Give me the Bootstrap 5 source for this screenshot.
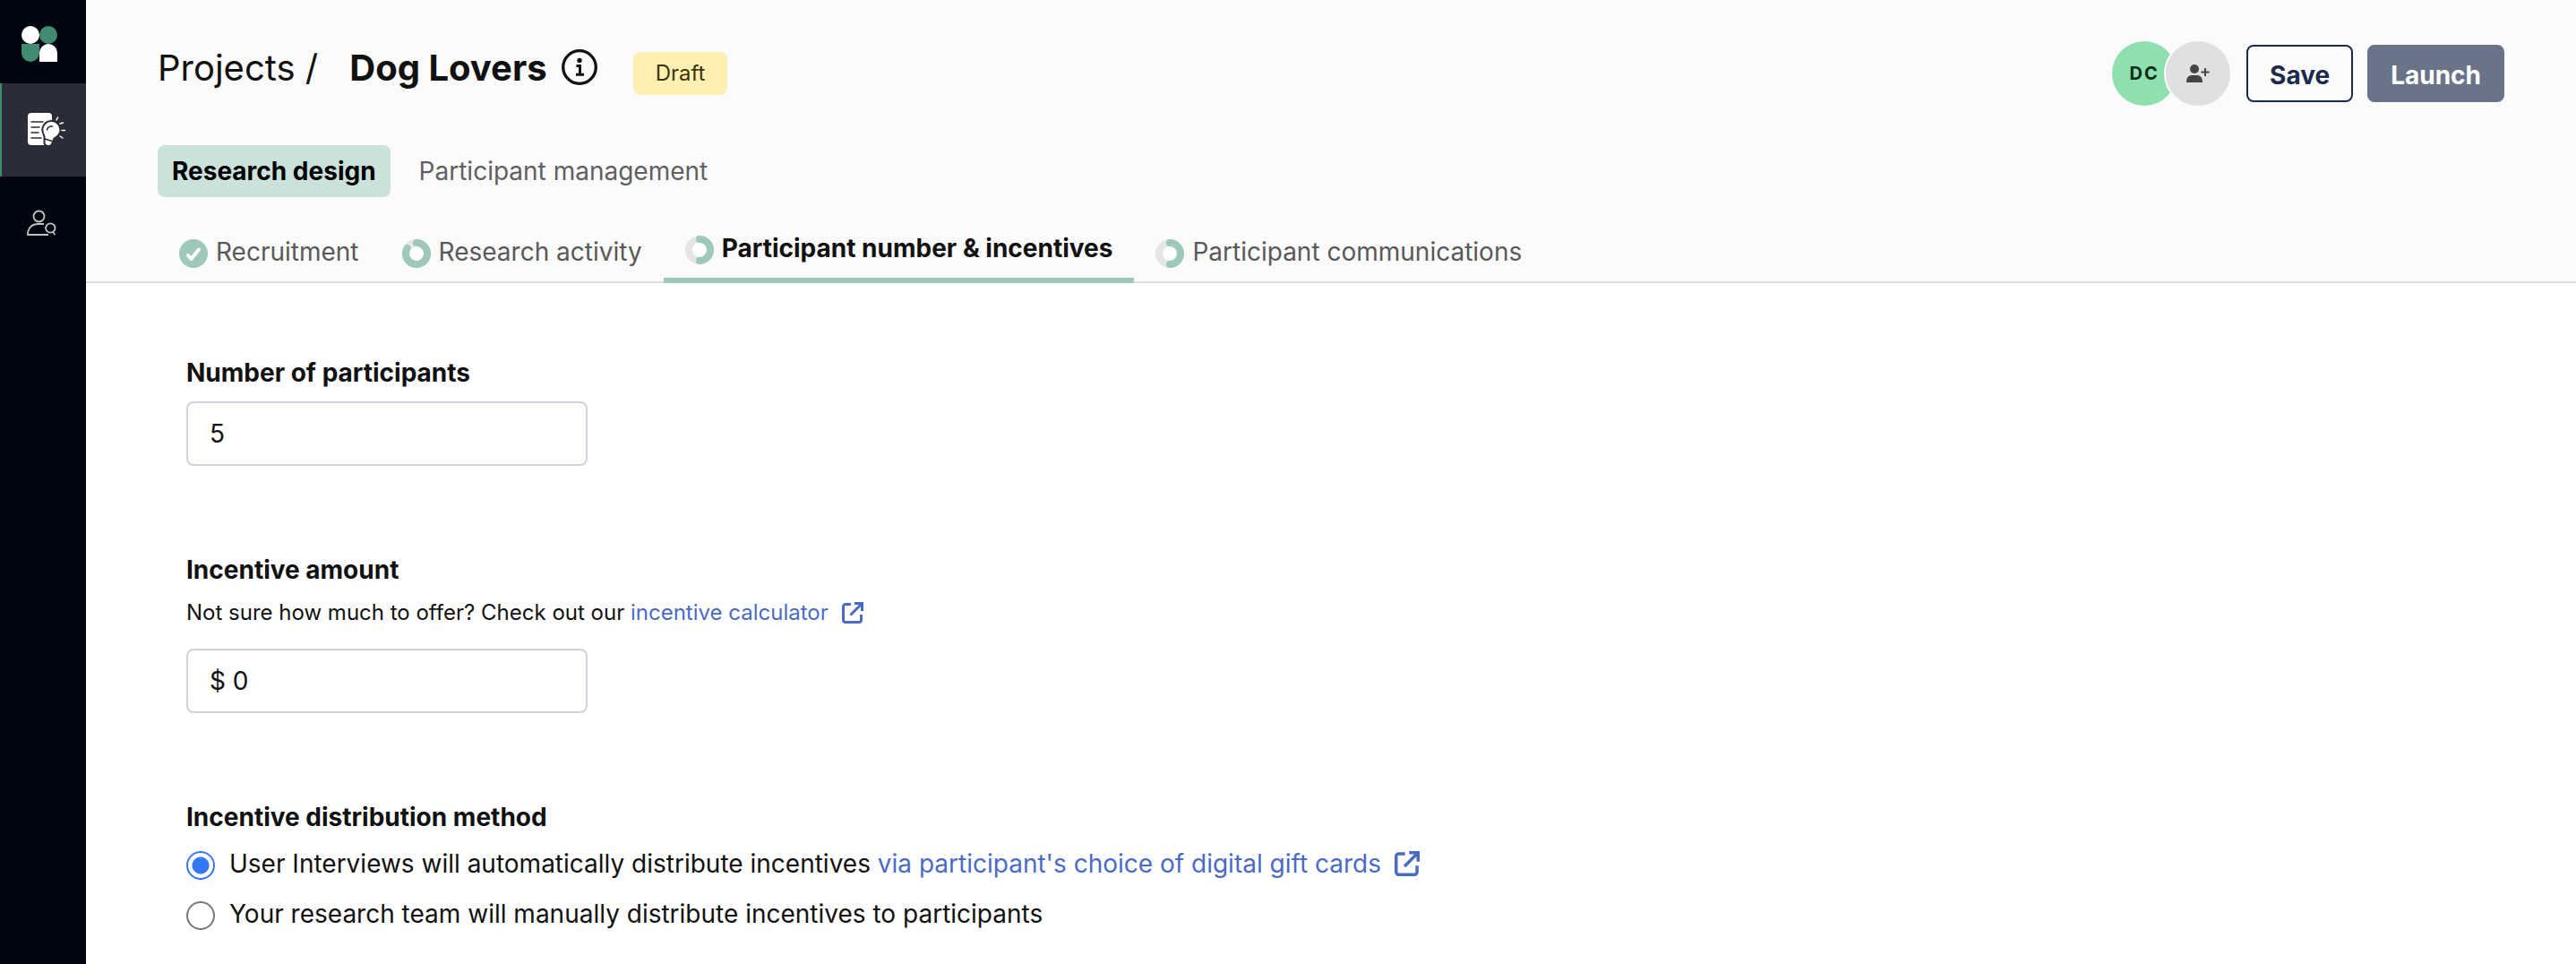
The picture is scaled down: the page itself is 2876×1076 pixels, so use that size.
<!DOCTYPE html>
<html lang="en">
<head>
<meta charset="utf-8">
<meta name="viewport" content="width=device-width, initial-scale=1">
<title>Dog Lovers</title>
<link href="https://cdn.jsdelivr.net/npm/bootstrap@5.3.0/dist/css/bootstrap.min.css" rel="stylesheet">
<style>
body{font-family:Inter,"Liberation Sans",sans-serif;font-size:28px;line-height:42px;color:#111;background:#fff}
a{text-decoration:none}
svg{display:block;flex:none}
.side-rail{width:96px;background:#00060f}
.rail-brand{height:93px;padding:29px 0 0 24px}
.rail-link{height:104px;padding-left:30px;display:flex;align-items:center}
.rail-link.active{background:#2a2d38;border-left:2px solid #418b70;padding-left:28px}
.page-head{background:#fbfbfb;border-bottom:2px solid #dcdcdc;padding:46px 80px 0}
.crumbs{font-size:40px;line-height:60px}
.crumbs h1{font-size:40px;line-height:60px;font-weight:700;margin:0 16px 0 35px}
.crumbs a{color:#111}
.info-btn{border:0;background:none;padding:0;margin-top:9px;color:#111}
.draft-tag{font-size:24px;line-height:48px;padding:0 25px;border-radius:8px;background:#fdf0b2;color:#3d3408;margin:12px 0 0 40px}
.avatar{width:72px;height:72px;border-radius:50%;border:0;padding:0;font-size:20px;font-weight:700;letter-spacing:2px}
.avatar-dc{background:#8ee0b0;color:#0c2c1a}
.avatar-add{width:76px;height:76px;background:#e0e0e0;border:2px solid #fbfbfb;margin:-2px 16px -2px -14px;color:#444}
.act{height:64px;font-size:28px;font-weight:700;line-height:42px;border-radius:8px;padding:11px 24px 7px;border:2px solid #1a2b4c;color:#1a2b4c;background:#fbfbfb}
.act-launch{background:#6a7488;border-color:#6a7488;color:#fff}
.main-tabs{margin-top:44px;gap:16px}
.main-tabs a{padding:8px 16px;border-radius:8px;color:#606060}
.main-tabs a.active{background:#cbe2db;color:#000;font-weight:700}
.steps{margin:36px 0 -2px}
.steps a{display:flex;align-items:center;gap:9px;padding:0 24px 14px;color:#595959}
.steps a.active{padding-bottom:12px;border-bottom:6px solid #9dc8bb;color:#111;font-weight:700}
.steps svg{margin-top:4px}
.form-body{padding:79px 112px 24px}
.field{margin-bottom:95px}
.field-title{display:block;font-size:28px;line-height:42px;font-weight:700;margin:0}
.field .form-control{width:448px;height:72px;border:2px solid #ced4da;border-radius:8px;padding:0 24px;font-size:28px;line-height:42px;color:#111;background:#fff;margin-top:11px}
.hint{font-size:24px;line-height:36px;margin:9px 0 0}
.field .hint + .form-control{margin-top:22px}
legend.field-title{float:none;margin-bottom:10px}
.ext{color:#4a6bc4;display:inline-flex;align-items:center;gap:15px}
.option{display:flex;gap:16px}
.option + .option{margin-top:14px}
.option .form-check-input{width:32px;height:32px;margin:7px 0 0;border:2px solid #767676;background-color:#fff;flex:none}
.option .form-check-input:checked{border-color:#3478f6;background-image:radial-gradient(circle,#3478f6 9px,#fff 10px)}
</style>
</head>
<body>
<div class="d-flex min-vh-100">
  <nav class="side-rail flex-shrink-0" aria-label="Main">
    <a class="rail-brand d-block" href="#" aria-label="Home">
      <svg width="40" height="40" viewBox="0 0 40 40"><circle cx="10" cy="10" r="10" fill="#fff"/><circle cx="30" cy="10" r="10" fill="#418b70"/><path d="M0 20h20v10a10 10 0 0 1-20 0z" fill="#418b70"/><path d="M20 40V30a10 10 0 0 1 20 0v10z" fill="#fff"/></svg>
    </a>
    <a class="rail-link active" href="#" aria-label="Projects">
      <svg width="44" height="40" viewBox="0 0 44 40" fill="none" stroke-linecap="round">
        <rect x="1" y="1" width="27" height="36" rx="4" fill="#fff"/>
        <path d="M5 11h13M5 17h9M5 23h8M5 29h11" stroke="#2a2d38" stroke-width="1.6"/>
        <path d="M19.500 31.500c1-3.500-.5-5.500-1.500-8a10 10 0 0 1 9-13.500 10 10 0 0 1 10.500 10c0 5-3.500 7.500-7 9.500l-2.500 6c-1.500 4-8.500 3-8.500-1.500z" fill="#fff" stroke="#2a2d38" stroke-width="2"/>
        <path d="M20 30l8 2.500" stroke="#2a2d38" stroke-width="1.500"/>
        <path d="M22.500 20c.5-3 3-4 6-4" stroke="#2a2d38" stroke-width="1.500"/>
        <path d="M33 9l1.500-3M37 13l3.500-1M39 20.500h3.500M37 27l3 2" stroke="#fff" stroke-width="1.500"/>
      </svg>
    </a>
    <a class="rail-link" href="#" aria-label="Participants">
      <svg width="34" height="30" viewBox="0 0 34 30" fill="none" stroke="#c0c2c5" stroke-width="1.800"><circle cx="13.500" cy="7.500" r="6"/><path d="M19 16h-6C6 16 1 20 1 28h23"/><circle cx="26.300" cy="20.500" r="5.200"/><path d="M29 25l2.500 3"/></svg>
    </a>
  </nav>
  <div class="flex-grow-1">
    <header class="page-head">
      <div class="d-flex justify-content-between align-items-start">
        <div class="crumbs d-flex align-items-start">
          <span><a href="#">Projects</a> /</span>
          <h1>Dog Lovers</h1>
          <button type="button" class="info-btn" aria-label="Project information">
            <svg width="40" height="40" viewBox="0 0 40 40" fill="none" stroke="currentColor"><circle cx="20" cy="20" r="18.300" stroke-width="3.300"/><circle cx="20" cy="12.500" r="2.700" fill="currentColor" stroke="none"/><path d="M16.500 18.500H20.500V28M16 28.200h9" stroke-width="3"/></svg>
          </button>
          <span class="draft-tag">Draft</span>
        </div>
        <div class="d-flex align-items-center">
          <span class="avatar avatar-dc d-flex align-items-center justify-content-center">DC</span>
          <button type="button" class="avatar avatar-add d-flex align-items-center justify-content-center" aria-label="Add collaborator">
            <svg width="26" height="22" viewBox="0 0 26 22" fill="currentColor"><circle cx="9" cy="6" r="5"/><path d="M0 21c0-6 3-8 6-8h6c3 0 6 2 6 8z"/><path d="M21 5v9M16.500 9.500h9" stroke="currentColor" stroke-width="2"/></svg>
          </button>
          <div class="d-flex gap-3">
            <button type="button" class="btn act">Save</button>
            <button type="button" class="btn act act-launch">Launch</button>
          </div>
        </div>
      </div>
      <nav class="main-tabs d-flex" aria-label="Project sections">
        <a class="active" href="#">Research design</a>
        <a href="#">Participant management</a>
      </nav>
      <nav class="steps d-flex align-items-end" aria-label="Steps">
        <a href="#"><svg width="32" height="32" viewBox="0 0 32 32"><circle cx="16" cy="16" r="16" fill="#9dc8bb"/><path d="M10 18l3.500 4 8.500-10.500" fill="none" stroke="#fff" stroke-width="4" stroke-linecap="round" stroke-linejoin="round"/></svg>Recruitment</a>
        <a href="#"><svg width="32" height="32" viewBox="0 0 32 32" fill="none" stroke-width="8"><circle cx="16" cy="16" r="12" fill="#fff" stroke="#e5e5e5"/><path d="M16 4a12 12 0 1 1-10.400 6" stroke="#9dc8bb" stroke-linecap="round"/></svg>Research activity</a>
        <a class="active" href="#" aria-current="step"><svg width="32" height="32" viewBox="0 0 32 32" fill="none" stroke-width="8"><circle cx="16" cy="16" r="12" fill="#fff" stroke="#e5e5e5"/><path d="M16 4a12 12 0 0 1 0 24" stroke="#9dc8bb" stroke-linecap="round"/></svg>Participant number &amp; incentives</a>
        <a href="#"><svg width="32" height="32" viewBox="0 0 32 32" fill="none" stroke-width="8"><circle cx="16" cy="16" r="12" fill="#fff" stroke="#e5e5e5"/><path d="M16 4a12 12 0 0 1 0 24" stroke="#9dc8bb" stroke-linecap="round"/></svg>Participant communications</a>
      </nav>
    </header>
    <main class="form-body">
      <form>
        <div class="field">
          <label class="field-title" for="count">Number of participants</label>
          <input class="form-control" id="count" type="text" inputmode="numeric" value="5">
        </div>
        <div class="field">
          <label class="field-title" for="amount">Incentive amount</label>
          <p class="hint">Not sure how much to offer? Check out our <a class="ext" href="#">incentive calculator
            <svg width="24" height="24" viewBox="0 0 24 24" fill="none" stroke="currentColor" stroke-width="3"><path d="M10 2.500H4A2.500 2.500 0 0 0 1.500 5v15A2.500 2.500 0 0 0 4 22.500h15a2.500 2.500 0 0 0 2.500-2.500v-6M14 1.500h8.500V10M22 2L9.500 14.500"/></svg></a></p>
          <input class="form-control" id="amount" type="text" value="$ 0">
        </div>
        <fieldset>
          <legend class="field-title">Incentive distribution method</legend>
          <div class="option">
            <input class="form-check-input" type="radio" name="method" id="auto" checked>
            <label for="auto">User Interviews will automatically distribute incentives <a class="ext" href="#">via participant's choice of digital gift cards
              <svg width="28" height="28" viewBox="0 0 24 24" fill="none" stroke="currentColor" stroke-width="3"><path d="M10 2.500H4A2.500 2.500 0 0 0 1.500 5v15A2.500 2.500 0 0 0 4 22.500h15a2.500 2.500 0 0 0 2.500-2.500v-6M14 1.500h8.500V10M22 2L9.500 14.500"/></svg></a></label>
          </div>
          <div class="option">
            <input class="form-check-input" type="radio" name="method" id="manual">
            <label for="manual">Your research team will manually distribute incentives to participants</label>
          </div>
        </fieldset>
      </form>
    </main>
  </div>
</div>
<script src="https://cdn.jsdelivr.net/npm/bootstrap@5.3.0/dist/js/bootstrap.bundle.min.js"></script>
</body>
</html>
